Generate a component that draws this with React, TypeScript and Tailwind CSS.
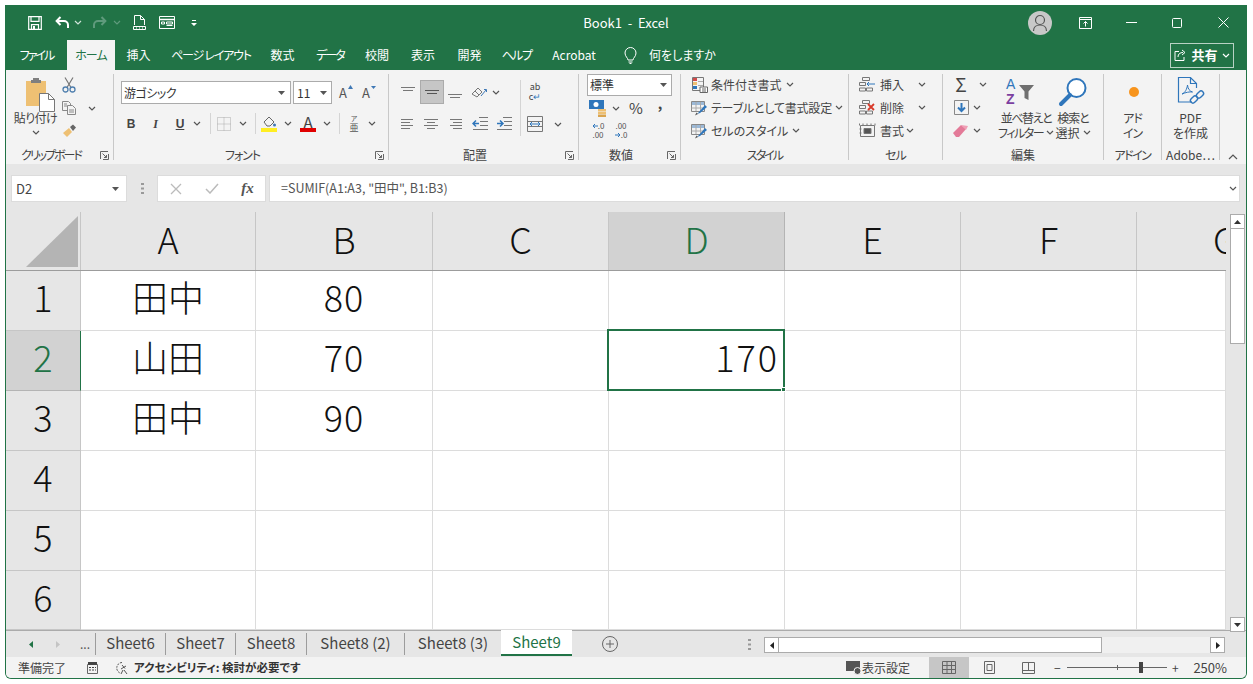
import React from "react";

const Chev = ({ c = "#555" }: { c?: string }) => (
  <svg width="8" height="5" viewBox="0 0 8 5" fill="none"><path d="M1 1l3 3 3-3" stroke={c} strokeWidth="1.2" /></svg>
);
const Tri = ({ c = "#555" }: { c?: string }) => (
  <svg width="7" height="4" viewBox="0 0 7 4"><path d="M0 0h7L3.5 4z" fill={c} /></svg>
);
const Launcher = () => (
  <svg width="9" height="9" viewBox="0 0 9 9" fill="none" stroke="#666"><path d="M.5 8V.5H8M8.5 3v5.5H3M2.5 2.5l4 4M6.5 4v2.5H4" /></svg>
);
const Lines = ({ rows, sel }: { rows: number[][]; sel?: boolean }) => (
  <svg width="16" height="14" viewBox="0 0 16 14" stroke={sel ? "#555" : "#777"} fill="none">
    {rows.map((r, i) => <path key={i} d={`M${r[0]} ${r[2]}.5H${r[1]}`} />)}
  </svg>
);

const Save = () => (
  <svg width="14" height="14" viewBox="0 0 14 14" fill="none" stroke="#fff" strokeWidth="1.2"><path d="M.7.7h12.6v12.6H.7z" /><path d="M3 .7v4.6h8V.7M3.5 13.3V8.6h7v4.7" /><path d="M5 10h2v3H5z" fill="#fff" stroke="none" /></svg>
);
const Undo = ({ c = "#fff" }: { c?: string }) => (
  <svg width="15" height="13" viewBox="0 0 15 13" fill="none" stroke={c} strokeWidth="2"><path d="M5.5 1L1.6 5l3.9 4M2 5h7a4 4 0 0 1 4 4v3" /></svg>
);
const Redo = () => (
  <svg width="15" height="13" viewBox="0 0 15 13" fill="none" stroke="#5f9a7c" strokeWidth="2"><path d="M9.5 1l3.9 4-3.9 4M13 5H6a4 4 0 0 0-4 4v3" /></svg>
);
const Preview = () => (
  <svg width="13" height="15" viewBox="0 0 13 15" fill="none" stroke="#fff"><path d="M1.5 10V.5h6l4 4V10M7.5.5v4h4" /><path d="M.5 11.5h12v3H.5z" /><path d="M3 13h1M6 13h1M9 13h1" /></svg>
);
const FormIcon = () => (
  <svg width="16" height="13" viewBox="0 0 16 13" fill="none" stroke="#fff"><path d="M.5.5h15v12H.5z" /><path d="M.5 3.5h15" strokeWidth="1.5" /><path d="M2.5 6h3v2h-3zM7.5 6h6v2h-6zM7.5 9.5h6" /></svg>
);

const PasteIcon = () => (
  <svg width="30" height="34" viewBox="0 0 30 34">
    <path d="M0 3h20v25H0z" fill="#eec073" />
    <path d="M7 0h6v3H7z" fill="#7f7f7f" />
    <path d="M5 2h10v3H5z" fill="#7f7f7f" />
    <path d="M13.5 15.5h9l6 6v12h-15z" fill="#fff" stroke="#777" />
    <path d="M22.5 15.5v6h6" fill="none" stroke="#777" />
  </svg>
);
const Cut = () => (
  <svg width="14" height="16" viewBox="0 0 14 16" fill="none"><path d="M3 .5l6 10M11 .5l-6 10" stroke="#777" strokeWidth="1.2" /><circle cx="3.5" cy="12.5" r="2.5" stroke="#4f7fae" strokeWidth="1.3" /><circle cx="10.5" cy="12.5" r="2.5" stroke="#4f7fae" strokeWidth="1.3" /></svg>
);
const Copy = () => (
  <svg width="14" height="14" viewBox="0 0 14 14" fill="none" stroke="#888"><path d="M.5.5h6l2 2v7h-8z" fill="#f3f3f3" /><path d="M5.5 4.5h5l3 3v6h-8z" fill="#f3f3f3" /><path d="M2 3h3M2 5h3M7 9h5M7 11h5" /></svg>
);
const Brush = () => (
  <svg width="15" height="14" viewBox="0 0 15 14"><path d="M1 9l6-5 3 4-5 5z" fill="#eec073" /><path d="M8 3l3-2.5 3 3L11 7z" fill="#666" /></svg>
);
const Grow = ({ up }: { up: boolean }) => (
  <span className="relative inline-block w-[14px] h-[16px] text-[13px] leading-[16px] text-[#555]">A
    <svg className="absolute right-0 top-0" width="5" height="4" viewBox="0 0 5 4"><path d={up ? "M0 4L2.5 0 5 4z" : "M0 1h5L2.5 4z"} fill="#3f78b5" /></svg>
  </span>
);
const Borders = () => (
  <svg width="14" height="14" viewBox="0 0 14 14" fill="none" stroke="#aaa" strokeDasharray="1 1"><path d="M.5.5h13v13H.5zM7 .5v13M.5 7h13" /></svg>
);
const Fill = () => (
  <svg width="16" height="17" viewBox="0 0 16 17" fill="none"><path d="M3 7l5-5 5 5-4 4H6z" stroke="#666" /><circle cx="13.5" cy="10" r="1.5" fill="#3f78b5" /><path d="M0 13h16v4H0z" fill="#ffee22" /></svg>
);
const Fura = () => (
  <span className="flex flex-col items-center text-[#555]"><span className="text-[7px] leading-[9px]">ア</span><span className="text-[9px] leading-[10px]">亜</span></span>
);
const Orient = () => (
  <svg width="17" height="13" viewBox="0 0 17 13" fill="none" stroke="#777"><path d="M1 8l6-6 4 4-5 5zM4 5l4 4" /><path d="M10 10l5-6M13 3.5h2.5V6" stroke="#3f78b5" /></svg>
);
const Indent = ({ rev }: { rev: boolean }) => (
  <svg width="16" height="14" viewBox="0 0 16 14" fill="none"><path d="M7 .5h9M8 4.5h8M8 8.5h8M1 12.5h15" stroke="#777" /><path d={rev ? "M7 6.5H1M4 3.5l-3 3 3 3" : "M1 6.5h6M4 3.5l3 3-3 3"} stroke="#2f76bb" strokeWidth="1.5" /></svg>
);
const Merge = () => (
  <svg width="16" height="16" viewBox="0 0 16 16" fill="none"><path d="M.5.5h15v15H.5zM.5 5.500h15M.5 10.500h15" stroke="#777" /><path d="M3 8h10M5 6l-2 2 2 2M11 6l2 2-2 2" stroke="#2f76bb" /></svg>
);
const Currency = () => (
  <svg width="18" height="17" viewBox="0 0 18 17"><path d="M0 0h15v9H0z" fill="#2f76bb" /><circle cx="7" cy="4.5" r="2.5" fill="#fff" /><path d="M9 9h8v2.500H9zM9 12h8v2H9z" fill="#eec073" /><path d="M9 14.500h8V17H9z" fill="#d9a44e" /></svg>
);
const Dec = ({ inc }: { inc: boolean }) => (
  <span className="flex flex-col items-center text-[8px] leading-[9px] text-[#555]">
    <span className="flex items-center">{inc ? <svg width="6" height="6" viewBox="0 0 6 6"><path d="M6 3H1M3 1L1 3l2 2" stroke="#2f76bb" fill="none" /></svg> : null}{inc ? ".0" : ".00"}</span>
    <span className="flex items-center">{inc ? ".00" : <svg width="6" height="6" viewBox="0 0 6 6"><path d="M0 3h5M3 1l2 2-2 2" stroke="#2f76bb" fill="none" /></svg>}{inc ? "" : ".0"}</span>
  </span>
);
const Cond = () => (
  <svg width="16" height="16" viewBox="0 0 16 16" fill="none"><path d="M.5.5h11v13H.5z" stroke="#777" /><path d="M1 1h4v3H1z" fill="#d24b4b" /><path d="M1 5h4v3H1z" fill="#eec073" /><path d="M1 9h4v3H1z" fill="#2f76bb" /><path d="M6 4.500h5M6 8.500h5" stroke="#aaa" /><path d="M8 10h7.500v5.500H8z" fill="#fff" stroke="#666" /><path d="M10 12h4M10 14h4" stroke="#666" /></svg>
);
const TableFmt = () => (
  <svg width="17" height="16" viewBox="0 0 17 16" fill="none"><path d="M.5 1.500h13v10H.5z" stroke="#888" /><path d="M1 2h12v3H1z" fill="#9bb9d8" /><path d="M.5 8h13M5 2v9M9.500 2v9" stroke="#aaa" /><path d="M6 14l2-2 6-7 2 2-7 6z" fill="#2f76bb" /><path d="M4 15.500l3-1.500-1.500-1.500z" fill="#555" /></svg>
);
const InsCell = () => (
  <svg width="17" height="15" viewBox="0 0 17 15" fill="none" stroke="#777"><path d="M3.500.5h7v3h-7zM.5 5.500h6v3h-6zM.5 11h6v3h-6zM7.500 11h6v3h-6z" /><path d="M8 7h8M10 5L8 7l2 2" stroke="#2f76bb" /></svg>
);
const DelCell = () => (
  <svg width="17" height="15" viewBox="0 0 17 15" fill="none"><path d="M3.500.5h7v3h-7zM.5 5.500h6v3h-6zM.5 11h6v3h-6zM7.500 11h6v3h-6z" stroke="#777" /><path d="M9 4l6 6M15 4l-6 6" stroke="#d83a2a" strokeWidth="1.800" /></svg>
);
const FmtCell = () => (
  <svg width="17" height="16" viewBox="0 0 17 16" fill="none" stroke="#777"><path d="M1.500 2.500h14v11h-14z" /><path d="M.5 .5v2M4 .5v2M8 .5v2M12 .5v2M16 .5v2M.5 6h2M.5 10h2" /><path d="M5 5.500h7v5H5z" fill="#555" /></svg>
);
const FillDown = () => (
  <svg width="15" height="15" viewBox="0 0 15 15" fill="none"><path d="M.5.5h14v14H.5z" stroke="#888" /><path d="M7.500 3v8M4 7.500l3.500 3.500L11 7.500" stroke="#2f76bb" strokeWidth="2" /></svg>
);
const Eraser = () => (
  <svg width="16" height="12" viewBox="0 0 16 12"><path d="M0 8l8-8 5 4-7 8H3z" fill="#e37a98" /><path d="M8 0l7 1-2 4z" fill="#ef9fb5" /></svg>
);
const Sort = () => (
  <svg width="30" height="30" viewBox="0 0 30 30">
    <text x="1" y="12" fontSize="14" fontFamily="Liberation Sans" fill="#2f76bb">A</text>
    <text x="1" y="27" fontSize="14" fontWeight="700" fontFamily="Liberation Sans" fill="#7b3fa0">Z</text>
    <path d="M14 8h15l-5.500 6.500V23l-4-2v-6.500z" fill="#6f6f6f" />
  </svg>
);
const Find = () => (
  <svg width="30" height="30" viewBox="0 0 30 30" fill="none"><circle cx="18.500" cy="11" r="9" stroke="#2f76bb" strokeWidth="2" fill="#fff" /><path d="M12 18L3 27" stroke="#2f76bb" strokeWidth="4" strokeLinecap="round" /></svg>
);
const Pdf = () => (
  <svg width="30" height="32" viewBox="0 0 30 32" fill="none"><path d="M16 26H2.500V1.500h12l6 6V12M14.500 1.500v6h6" stroke="#2f76bb" strokeWidth="1.200" /><path d="M6 18c3-1 5-5 5.500-9 .5 4 2 6 5 7-3-.5-7 .5-10.500 2z" stroke="#2f76bb" /><g stroke="#2f76bb" strokeWidth="1.400"><rect x="14" y="21" width="8" height="5" rx="2.500" transform="rotate(-45 18 23.500)" /><rect x="20" y="16" width="8" height="5" rx="2.500" transform="rotate(-45 24 18.500)" /></g></svg>
);

const Group = ({ className, label, labelClass = "", launcher, children }: { className: string; label: string; labelClass?: string; launcher?: boolean; children: React.ReactNode }) => (
  <div className={`flex flex-col ${className}`}>
    <div className="h-[78px]">{children}</div>
    <div className="flex h-[14px] items-center">
      <div className={`flex-1 text-center text-[12px] leading-[14px] text-[#444] whitespace-nowrap ${labelClass}`}>{label}</div>
      {launcher && <div className="w-[17px] flex justify-center"><Launcher /></div>}
    </div>
  </div>
);
const Sep = () => <div className="w-px bg-[#c8c8c8] my-[4px]" />;
const MiniSep = () => <div className="w-px h-[21px] bg-[#d4d4d4]" />;
const Box = ({ className, children }: { className: string; children?: React.ReactNode }) => (
  <div className={`flex items-center justify-center shrink-0 ${className}`}>{children}</div>
);
const Big = ({ className, icon, l1, l2 }: { className: string; icon: React.ReactNode; l1: React.ReactNode; l2: React.ReactNode }) => (
  <div className={`flex flex-col items-center pt-[6px] ${className}`}>
    <div className="h-[32px] flex items-center justify-center">{icon}</div>
    <div className="mt-[2px] text-[12px] leading-[15px] text-[#444] text-center whitespace-nowrap">{l1}<br />{l2}</div>
  </div>
);

const colW = ["w-[175px]", "w-[177px]", "w-[176px]", "w-[176px]", "w-[176px]", "w-[176px]", "w-[89px]"];
const cols = ["A", "B", "C", "D", "E", "F", "G"];
const rows: string[][] = [
  ["田中", "80", "", "", "", "", ""],
  ["山田", "70", "", "170", "", "", ""],
  ["田中", "90", "", "", "", "", ""],
  ["", "", "", "", "", "", ""],
  ["", "", "", "", "", "", ""],
  ["", "", "", "", "", "", ""],
];
const tabs = [
  ["Sheet6", "w-[70px]"],
  ["Sheet7", "w-[70px]"],
  ["Sheet8", "w-[71px]"],
  ["Sheet8 (2)", "w-[98px]"],
  ["Sheet8 (3)", "w-[97px]"],
];

export default function App() {
  return (
    <div className="w-[1253px] h-[684px] bg-white pt-[5px] pl-[5px] font-['Noto_Sans_CJK_JP',sans-serif] [font-feature-settings:'palt'] overflow-hidden">
      <div className="w-[1242px] h-[674px] flex flex-col border-x border-b border-[#217346] rounded-b-[6px] overflow-hidden bg-[#e6e6e6]">
        {/* title bar */}
        <div className="h-[35px] bg-[#217346] flex items-center text-white shrink-0">
          <div className="w-[570px] flex items-center">
            <Box className="w-[21px] ml-[18px]"><Save /></Box>
            <Box className="w-[17px] ml-[9px]"><Undo /></Box>
            <Box className="w-[8px] ml-[3px]"><Chev c="#cfe3d8" /></Box>
            <Box className="w-[17px] ml-[9px]"><Redo /></Box>
            <Box className="w-[8px] ml-[5px]"><Chev c="#5f9a7c" /></Box>
            <Box className="w-[14px] ml-[11px]"><Preview /></Box>
            <Box className="w-[16px] ml-[13px]"><FormIcon /></Box>
            <Box className="w-[8px] ml-[15px]"><svg width="6" height="6" viewBox="0 0 6 6" fill="#fff"><path d="M1 0h4v1H1zM0 3h6L3 6z" /></svg></Box>
          </div>
          <div className="w-[100px] text-center text-[13px] whitespace-nowrap">Book1&nbsp;&nbsp;-&nbsp;&nbsp;Excel</div>
          <div className="flex-1" />
          <div className="w-[24px] h-[24px] rounded-full bg-[#c8c8c8] flex items-center justify-center mr-[10px]">
            <svg width="18" height="18" viewBox="0 0 18 18" fill="none" stroke="#555" strokeWidth="1.200"><circle cx="9" cy="6" r="4.500" /><path d="M2.500 17c0-4 3-6 6.500-6s6.500 2 6.500 6" /></svg>
          </div>
          <Box className="w-[46px]"><svg width="13" height="12" viewBox="0 0 13 12" fill="none" stroke="#fff"><path d="M.5.5h12v11H.5zM.5 2.500h12" /><path d="M6.500 9.500V4.500M4.500 6.500l2-2 2 2" /></svg></Box>
          <Box className="w-[46px]"><svg width="11" height="1"><path d="M0 .5h11" stroke="#fff" /></svg></Box>
          <Box className="w-[46px]"><svg width="10" height="10" fill="none"><rect x=".5" y=".5" width="9" height="9" rx="1" stroke="#fff" /></svg></Box>
          <Box className="w-[46px]"><svg width="11" height="11"><path d="M.5.5l10 10M10.500.5l-10 10" stroke="#fff" /></svg></Box>
        </div>
        {/* tabs */}
        <div className="h-[30px] bg-[#217346] flex items-center text-white text-[12px] shrink-0 whitespace-nowrap">
          <Box className="w-[61px] tracking-[-2px]">ファイル</Box>
          <Box className="w-[48px] h-full bg-[#f3f3f3] text-[#217346] tracking-[-1px]">ホーム</Box>
          <Box className="w-[47px]">挿入</Box>
          <Box className="w-[98px] tracking-[-1.2px]">ページ レイアウト</Box>
          <Box className="w-[45px]">数式</Box>
          <Box className="w-[50px] tracking-[-2px]">データ</Box>
          <Box className="w-[44px]">校閲</Box>
          <Box className="w-[48px]">表示</Box>
          <Box className="w-[45px]">開発</Box>
          <Box className="w-[49px] tracking-[-1.5px]">ヘルプ</Box>
          <Box className="w-[66px]">Acrobat</Box>
          <Box className="w-[24px] ml-[11px]"><svg width="13" height="17" viewBox="0 0 13 17" fill="none" stroke="#fff"><path d="M4 13c0-2-3-3.500-3-7a5.500 5.500 0 0 1 11 0c0 3.500-3 5-3 7zM4.500 15h4M5.500 16.500h2" /></svg></Box>
          <div className="ml-[7px]">何をしますか</div>
          <div className="ml-auto mr-[12px] w-[64px] h-[25px] border border-[#b8d2c4] flex items-center justify-center gap-[4px]">
            <svg width="13" height="12" viewBox="0 0 13 12" fill="none" stroke="#fff"><path d="M5 2.500H1v9h9V8M4 8c0-3 2-4.500 5-4.500M8 1l3 2.500L8 6" /></svg>
            <span className="font-bold text-[13px]">共有</span>
            <Chev c="#fff" />
          </div>
        </div>
        {/* ribbon */}
        <div className="h-[94px] bg-[#f3f3f3] flex shrink-0 text-[#444]">
          <Group className="w-[107px]" label="クリップボード" labelClass="tracking-[-2px]" launcher>
            <div className="flex">
              <div className="w-[59px] flex flex-col items-center pt-[8px]">
                <div className="h-[33px] ml-[10px]"><PasteIcon /></div>
                <div className="text-[12px] leading-[14px] tracking-[-0.5px]">貼り付け</div>
                <div className="mt-[5px]"><Chev /></div>
              </div>
              <div className="flex flex-col items-center w-[14px] -ml-[3px] pt-[7px]">
                <div className="h-[24px]"><Cut /></div>
                <div className="h-[23px]"><Copy /></div>
                <Brush />
              </div>
              <div className="w-[32px] flex justify-center pt-[36px]"><Chev /></div>
            </div>
          </Group>
          <Sep />
          <Group className="w-[274px]" label="フォント" labelClass="tracking-[-1px]" launcher>
            <div className="pt-[11px] pl-[7px] flex items-center">
              <div className="w-[170px] h-[23px] border border-[#ababab] bg-white flex items-center pl-[2px] pr-[5px] text-[12px] text-[#333]"><span className="flex-1 tracking-[-0.5px]">游ゴシック</span><Tri /></div>
              <div className="w-[39px] h-[23px] ml-[2px] border border-[#ababab] bg-white flex items-center pl-[3px] pr-[4px] text-[12px] text-[#333]"><span className="flex-1">11</span><Tri /></div>
              <Box className="w-[26px] ml-[1px]"><Grow up /></Box>
              <Box className="w-[20px]"><Grow up={false} /></Box>
            </div>
            <div className="pl-[5px] mt-[9px] h-[21px] flex items-center">
              <Box className="w-[24px] font-bold text-[12px] font-['Liberation_Sans',sans-serif]">B</Box>
              <Box className="w-[25px] italic font-bold text-[12px] font-['Liberation_Serif',serif]">I</Box>
              <Box className="w-[24px] underline font-bold text-[12px] font-['Liberation_Sans',sans-serif]">U</Box>
              <Box className="w-[10px]"><Chev /></Box>
              <Box className="w-[8px]" />
              <MiniSep />
              <Box className="w-[26px]"><Borders /></Box>
              <Box className="w-[12px]"><Chev /></Box>
              <Box className="w-[6px]" />
              <MiniSep />
              <Box className="w-[26px]"><Fill /></Box>
              <Box className="w-[12px]"><Chev /></Box>
              <Box className="w-[28px]">
                <div className="flex flex-col items-center leading-[12px] text-[15px] text-[#444]">A<div className="w-[16px] h-[4px] bg-[#e00000]" /></div>
              </Box>
              <Box className="w-[10px]"><Chev /></Box>
              <Box className="w-[7px]" />
              <MiniSep />
              <Box className="w-[28px]"><Fura /></Box>
              <Box className="w-[8px]"><Chev /></Box>
            </div>
          </Group>
          <Sep />
          <Group className="w-[189px]" label="配置" launcher>
            <div className="flex h-[66px] pt-[10px] pl-[7px]">
              <div className="w-[124px] flex flex-col">
                <div className="h-[24px] flex items-center">
                  <Box className="w-[23px]"><Lines rows={[[1, 15, 2], [3, 13, 5]]} /></Box>
                  <Box className="w-[24px] ml-[1px] h-[24px] bg-[#c6c6c6] border border-[#ababab]"><Lines sel rows={[[1, 15, 5], [3, 13, 8]]} /></Box>
                  <Box className="w-[22px]"><Lines rows={[[1, 15, 9], [3, 13, 12]]} /></Box>
                  <Box className="w-[26px]"><Orient /></Box>
                  <Box className="w-[8px]"><Chev /></Box>
                </div>
                <div className="h-[24px] mt-[8px] flex items-center">
                  <Box className="w-[23px]"><Lines rows={[[1, 13, 2], [1, 10, 5], [1, 13, 8], [1, 10, 11]]} /></Box>
                  <Box className="w-[24px]"><Lines rows={[[1, 15, 2], [4, 12, 5], [1, 15, 8], [4, 12, 11]]} /></Box>
                  <Box className="w-[24px]"><Lines rows={[[3, 15, 2], [6, 15, 5], [3, 15, 8], [6, 15, 11]]} /></Box>
                  <Box className="w-[25px]"><Indent rev /></Box>
                  <Box className="w-[24px]"><Indent rev={false} /></Box>
                </div>
              </div>
              <div className="w-px bg-[#d4d4d4]" />
              <div className="flex flex-col">
                <Box className="w-[28px] h-[24px] text-[9px] leading-[10px] text-[#444]"><span className="text-center">ab<br />c<span className="text-[#2f76bb]">↵</span></span></Box>
                <div className="h-[24px] mt-[8px] flex items-center">
                  <Box className="w-[28px]"><Merge /></Box>
                  <Box className="w-[18px]"><Chev /></Box>
                </div>
              </div>
            </div>
          </Group>
          <Sep />
          <Group className="w-[101px]" label="数値" launcher>
            <div className="pt-[4px] pl-[8px] flex flex-col">
              <div className="w-[85px] h-[22px] border border-[#ababab] bg-white flex items-center pl-[2px] pr-[4px] text-[12px] text-[#333]"><span className="flex-1">標準</span><Tri /></div>
              <div className="h-[20px] mt-[2px] flex items-center">
                <Box className="w-[22px]"><Currency /></Box>
                <Box className="w-[14px]"><Chev /></Box>
                <Box className="w-[26px] text-[15px] text-[#444]">%</Box>
                <Box className="w-[22px] font-bold text-[14px] text-[#444] pb-[10px]">,</Box>
              </div>
              <div className="h-[20px] mt-[2px] flex items-center">
                <Box className="w-[22px]"><Dec inc /></Box>
                <Box className="w-[24px]"><Dec inc={false} /></Box>
              </div>
            </div>
          </Group>
          <Sep />
          <Group className="w-[167px]" label="スタイル" labelClass="tracking-[-2px]">
            <div className="pt-[3px] pl-[9px] text-[12px] whitespace-nowrap">
              <div className="h-[23px] flex items-center"><Box className="w-[19px]"><Cond /></Box><span className="ml-[2px]">条件付き書式</span><span className="ml-[4px] flex"><Chev /></span></div>
              <div className="h-[23px] flex items-center"><Box className="w-[19px]"><TableFmt /></Box><span className="ml-[2px] tracking-[-0.2px]">テーブルとして書式設定</span><span className="ml-[3px] flex"><Chev /></span></div>
              <div className="h-[23px] flex items-center"><Box className="w-[19px]"><TableFmt /></Box><span className="ml-[2px]">セルのスタイル</span><span className="ml-[4px] flex"><Chev /></span></div>
            </div>
          </Group>
          <Sep />
          <Group className="w-[93px]" label="セル" labelClass="tracking-[-1px]">
            <div className="pt-[3px] pl-[9px] text-[12px] whitespace-nowrap">
              <div className="h-[23px] flex items-center"><Box className="w-[18px]"><InsCell /></Box><span className="ml-[4px] w-[36px]">挿入</span><Box className="w-[12px]"><Chev /></Box></div>
              <div className="h-[23px] flex items-center"><Box className="w-[18px]"><DelCell /></Box><span className="ml-[4px] w-[36px]">削除</span><Box className="w-[12px]"><Chev /></Box></div>
              <div className="h-[23px] flex items-center"><Box className="w-[18px]"><FmtCell /></Box><span className="ml-[4px]">書式</span><Box className="w-[12px]"><Chev /></Box></div>
            </div>
          </Group>
          <Sep />
          <Group className="w-[160px]" label="編集">
            <div className="flex">
              <div className="w-[55px] pt-[3px] pl-[9px]">
                <div className="h-[23px] flex items-center"><Box className="w-[18px] text-[19px] text-[#444]">Σ</Box><Box className="w-[26px]"><Chev /></Box></div>
                <div className="h-[23px] flex items-center"><Box className="w-[18px]"><FillDown /></Box><Box className="w-[14px]"><Chev /></Box></div>
                <div className="h-[23px] flex items-center"><Box className="w-[18px]"><Eraser /></Box><Box className="w-[14px]"><Chev /></Box></div>
              </div>
              <Big className="w-[56px]" icon={<div className="mr-[12px]"><Sort /></div>} l1={<span className="tracking-[-1.4px]">並べ替えと</span>} l2={<span className="inline-flex items-center gap-[3px]"><span className="tracking-[-1.5px]">フィルター</span><Chev /></span>} />
              <Big className="w-[38px]" icon={<Find />} l1={<span className="tracking-[-1px]">検索と</span>} l2={<span className="inline-flex items-center gap-[3px]">選択<Chev /></span>} />
            </div>
          </Group>
          <Sep />
          <Group className="w-[57px]" label="アドイン" labelClass="tracking-[-1.5px]">
            <Big className="w-full" icon={<div className="w-[10px] h-[10px] rounded-full bg-[#f7941d] ml-[2px]" />} l1={<span className="tracking-[-1px]">アド</span>} l2={<span className="tracking-[-1px]">イン</span>} />
          </Group>
          <Sep />
          <Group className="w-[57px]" label="Adobe⋯">
            <Big className="w-full" icon={<Pdf />} l1="PDF" l2="を作成" />
          </Group>
          <Sep />
          <div className="flex-1 flex items-end justify-center pb-[4px]">
            <svg width="10" height="6" viewBox="0 0 10 6" fill="none"><path d="M1 5l4-4 4 4" stroke="#555" strokeWidth="1.200" /></svg>
          </div>
        </div>
        {/* formula bar */}
        <div className="h-[48px] shrink-0 flex items-start pt-[11px] pl-[5px] bg-[#e6e6e6]">
          <div className="w-[116px] h-[27px] bg-white border border-[#dcdcdc] flex items-center pl-[4px] pr-[7px] text-[13px] text-[#444]"><span className="flex-1">D2</span><Tri /></div>
          <Box className="w-[30px] h-[27px]"><svg width="3" height="11" fill="#999"><path d="M0 0h3v2H0zM0 4.500h3v2H0zM0 9h3v2H0z" /></svg></Box>
          <div className="w-[109px] h-[27px] bg-white border border-[#dcdcdc] flex items-center">
            <Box className="w-[36px]"><svg width="12" height="12"><path d="M1 1l10 10M11 1L1 11" stroke="#bbb" strokeWidth="1.300" /></svg></Box>
            <Box className="w-[36px]"><svg width="14" height="11" fill="none"><path d="M1 6l4 4 8-9" stroke="#bbb" strokeWidth="1.500" /></svg></Box>
            <Box className="w-[35px] italic font-bold text-[15px] font-['Liberation_Serif',serif] text-[#555]">fx</Box>
          </div>
          <div className="w-[971px] h-[27px] ml-[3px] bg-white border border-[#dcdcdc] flex items-center pl-[11px] pr-[2px] text-[12.5px] text-[#555]">
            <span className="flex-1">=SUMIF(A1:A3, "田中", B1:B3)</span>
            <Chev />
          </div>
        </div>
        {/* grid */}
        <div className="h-[418px] shrink-0 flex [font-feature-settings:normal]">
          <div className="w-[1220px]">
            <div className="flex h-[59px] border-b border-[#9c9c9c] bg-[#e6e6e6]">
              <div className="w-[75px] border-r border-[#c6c6c6] flex items-end justify-end pr-[2px] pb-[3px]">
                <svg width="52" height="51" viewBox="0 0 52 51"><path d="M52 0v51H0z" fill="#b4b4b4" /></svg>
              </div>
              {cols.map((c, i) => (
                <div key={c} className={`${colW[i]} flex justify-center overflow-hidden border-r ${i === 3 ? "bg-[#d2d2d2] text-[#217346] border-[#b4b4b4]" : "text-[#111] border-[#c6c6c6]"} ${i === 6 ? "justify-start border-r-0" : ""}`}>
                  <span className={`text-[36px] leading-[52px] font-light ${i === 6 ? "w-[176px] text-center shrink-0" : ""}`}>{c}</span>
                </div>
              ))}
            </div>
            {rows.map((r, ri) => (
              <div key={ri} className={`flex ${ri === 5 ? "h-[59px]" : "h-[60px]"}`}>
                <div className={`w-[75px] flex items-center justify-center pb-[9px] text-[36px] font-light border-b border-r ${ri === 1 ? "bg-[#d2d2d2] text-[#217346] border-r-[#217346] border-b-[#b4b4b4]" : "bg-[#e6e6e6] text-[#111] border-[#c6c6c6]"}`}>{ri + 1}</div>
                {r.map((v, ci) => (
                  <div key={ci} className={`${colW[ci]} bg-white border-b border-r border-[#dcdcdc] flex items-center pb-[9px] text-[36px] font-light text-[#111] relative ${v === "170" ? "justify-end pr-[5px] tracking-[2px]" : "justify-center"} ${ci === 1 ? "tracking-[1px]" : ""}`}>
                    {v}
                    {v === "170" && (
                      <div className="absolute -left-[2px] -top-[2px] w-[178px] h-[62px] border-2 border-[#217346] z-10">
                        <div className="absolute -right-[3px] -bottom-[3px] w-[5px] h-[5px] bg-[#217346] border border-white" />
                      </div>
                    )}
                  </div>
                ))}
              </div>
            ))}
          </div>
          <div className="w-[20px] bg-[#e6e6e6] flex flex-col items-center pt-[2px] pl-[2px]">
            <Box className="w-[15px] h-[15px] bg-white border border-[#ababab]"><svg width="7" height="4"><path d="M0 4h7L3.500 0z" fill="#333" /></svg></Box>
            <div className="w-[15px] h-[115px] bg-white border border-t-0 border-[#ababab]" />
            <div className="flex-1" />
            <Box className="w-[15px] h-[15px] -mb-[2px] z-10 bg-white border border-[#ababab]"><Tri c="#333" /></Box>
          </div>
        </div>
        {/* sheet tabs */}
        <div className="h-[27px] shrink-0 flex bg-[#e6e6e6] border-t border-[#ababab] text-[15px] text-[#444] whitespace-nowrap [font-feature-settings:normal]">
          <div className="w-[89px] flex items-center">
            <Box className="w-[50px]"><svg width="4" height="7"><path d="M4 0v7L0 3.500z" fill="#217346" /></svg></Box>
            <svg width="4" height="7"><path d="M0 0v7l4-3.500z" fill="#c4c4c4" /></svg>
            <span className="ml-[20px] text-[12px] text-[#555]">...</span>
          </div>
          {tabs.map(([t, w]) => (
            <div key={t} className={`${w} flex items-center justify-center border-l border-[#9c9c9c] my-[2px] pb-[2px]`}>{t}</div>
          ))}
          <div className="w-[71px] -mt-px bg-white border-b-2 border-[#217346] text-[#217346] flex items-center justify-center h-[26px]">Sheet9</div>
          <Box className="w-[76px] h-[26px]"><svg width="16" height="16" fill="none" stroke="#666"><circle cx="8" cy="8" r="7.500" /><path d="M8 4v8M4 8h8" /></svg></Box>
          <div className="w-[96px]" />
          <Box className="w-[10px] h-[26px]"><svg width="3" height="11" fill="#999"><path d="M0 0h3v2H0zM0 4.500h3v2H0zM0 9h3v2H0z" /></svg></Box>
          <div className="ml-[10px] mt-[6px] w-[461px] h-[16px] flex bg-[#f0f0f0]">
            <Box className="w-[15px] bg-white border border-[#ababab]"><svg width="4" height="7"><path d="M4 0v7L0 3.500z" fill="#222" /></svg></Box>
            <div className="w-[323px] bg-white border-y border-r border-[#ababab]" />
            <div className="flex-1" />
            <Box className="w-[15px] bg-white border border-[#ababab]"><svg width="4" height="7"><path d="M0 0v7l4-3.500z" fill="#222" /></svg></Box>
          </div>
        </div>
        {/* status */}
        <div className="h-[21px] shrink-0 bg-[#f3f3f3] flex items-center text-[12px] text-[#444] whitespace-nowrap">
          <span className="ml-[12px] w-[60px]">準備完了</span>
          <Box className="w-[12px] ml-[8px]"><svg width="11" height="12" fill="none"><path d="M.5 2.500h10v9H.5z" stroke="#666" /><path d="M1 0h9v3H1z" fill="#444" /><path d="M2 5h2v1H2zM5 5h2v1H5zM8 5h1v1H8zM2 7.500h2v1H2zM5 7.500h2v1H5zM8 7.500h1v1H8z" fill="#444" /></svg></Box>
          <Box className="w-[16px] ml-[17px]"><svg width="14" height="14" fill="none" stroke="#555"><path d="M6 1.500a5.500 5.500 0 0 0-2 10.500" strokeDasharray="2 1" /><path d="M6 4l3 3.500M5 8l5-3M7 9l-2 4M8 9l3 4" /></svg></Box>
          <span className="ml-[3px] font-bold text-[11.500px] text-[#333]">アクセシビリティ: 検討が必要です</span>
          <div className="flex-1" />
          <Box className="w-[16px]"><svg width="16" height="14"><path d="M0 0h14v10H0z" fill="#555" /><circle cx="11.500" cy="10" r="3.500" fill="#555" stroke="#f3f3f3" /></svg></Box>
          <span className="mr-[19px]">表示設定</span>
          <Box className="w-[40px] h-full bg-[#c6c6c6]"><svg width="14" height="13" fill="none" stroke="#666"><path d="M.5.5h13v12H.5zM.5 4.500h13M.5 8.500h13M5 .5v12M9.500.5v12" /></svg></Box>
          <Box className="w-[40px]"><svg width="11" height="13" fill="none" stroke="#666"><path d="M.5.500h10v12H.5zM3 3.500h5v6H3z" /></svg></Box>
          <Box className="w-[38px]"><svg width="13" height="12" fill="none" stroke="#666"><path d="M.5.500h12v11H.5zM.5 8.500h12M6.500.5v8" /></svg></Box>
          <span className="ml-[7px] w-[9px]">−</span>
          <div className="ml-[4px] w-[100px] h-[11px] flex items-center relative">
            <div className="w-full h-px bg-[#666]" />
            <div className="absolute left-[50px] w-px h-[5px] bg-[#666]" />
            <div className="absolute left-[72px] w-[4px] h-[11px] bg-[#444]" />
          </div>
          <span className="ml-[5px] w-[8px]">+</span>
          <span className="ml-[12px] mr-[19px] w-[35px] text-right text-[13px]">250%</span>
        </div>
      </div>
    </div>
  );
}
